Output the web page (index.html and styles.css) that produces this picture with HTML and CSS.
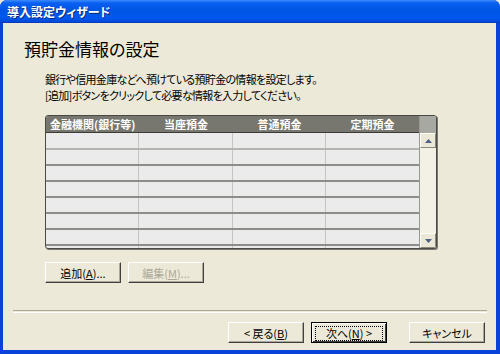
FILE: index.html
```html
<!DOCTYPE html>
<html lang="ja">
<head>
  <meta charset="UTF-8">
  <title>導入設定ウィザード</title>
  <link rel="stylesheet" href="styles.css">
</head>
<body>

  <div class="window">
    <div class="titlebar">導入設定ウィザード</div>

    <div class="content">
      <h1>預貯金情報の設定</h1>
      <div class="desc">
        <div>銀行や信用金庫などへ預けている預貯金の情報を設定します。</div>
        <div>[追加]ボタンをクリックして必要な情報を入力してください。</div>
      </div>

      <div class="list">
        <div class="grid">
          <div class="head">
            <div>金融機関(銀行等)</div>
            <div>当座預金</div>
            <div>普通預金</div>
            <div>定期預金</div>
          </div>
          <div class="row first"><div></div><div></div><div></div><div></div></div>
          <div class="row"><div></div><div></div><div></div><div></div></div>
          <div class="row"><div></div><div></div><div></div><div></div></div>
          <div class="row"><div></div><div></div><div></div><div></div></div>
          <div class="row"><div></div><div></div><div></div><div></div></div>
          <div class="row"><div></div><div></div><div></div><div></div></div>
          <div class="row"><div></div><div></div><div></div><div></div></div>
          <div class="row"><div></div><div></div><div></div><div></div></div>
        </div>
        <div class="scroll">
          <div class="scroll-head"></div>
          <div class="arrow up">
            <svg width="7" height="4" viewBox="0 0 7 4"><path d="M0 4 L3.5 0 L7 4 Z" fill="#4d6185"/></svg>
          </div>
          <div class="track"></div>
          <div class="arrow down">
            <svg width="7" height="4" viewBox="0 0 7 4"><path d="M0 0 L3.5 4 L7 0 Z" fill="#4d6185"/></svg>
          </div>
        </div>
      </div>

      <div class="actions">
        <button class="btn">追加(<u>A</u>)...</button>
        <button class="btn" disabled>編集(<u>M</u>)...</button>
      </div>

      <div class="sep"></div>

      <div class="nav">
        <button class="btn">&lt; 戻る(<u>B</u>)</button>
        <button class="btn default"><span>次へ(<u>N</u>) &gt;</span></button>
        <button class="btn cancel">キャンセル</button>
      </div>
    </div>
  </div>

</body>
</html>
```

FILE: styles.css
```css
body {
  margin: 0;
  font-family: "Noto Sans CJK JP", "Noto Sans", sans-serif;
  font-feature-settings: "palt";
  background: #ece9d8;
}

.window {
  width: 500px;
  height: 354px;
  box-sizing: border-box;
  display: flex;
  flex-direction: column;
  background: #0842d8;
  border-radius: 7px 7px 0 0;
  overflow: hidden;
}

.titlebar {
  height: 23px;
  line-height: 23px;
  padding-left: 7px;
  color: #fff;
  font-size: 12px;
  font-weight: bold;
  text-shadow: 1px 1px 0 #0a2a80;
  background: linear-gradient(#3c8cff 0, #0a60f0 3px, #0055e5 10px, #0058ee 18px, #0048d8 22px, #0a2fa0 23px);
}

.content {
  flex: 1;
  margin: 0 4px 4px 3px;
  background: #ece9d8;
  padding-left: 10px;
  padding-right: 9px;
}

h1 {
  margin: 15px 0 0 11px;
  font-size: 17px;
  font-weight: normal;
  line-height: 22px;
  color: #000;
}

.desc {
  margin: 11px 0 0 32px;
  font-size: 11px;
  line-height: 16px;
  letter-spacing: -0.7px;
  color: #000;
}

.list {
  margin: 12px 0 0 32px;
  width: 392px;
  height: 134px;
  box-sizing: border-box;
  display: flex;
  border: 1px solid #4a4a44;
  border-radius: 3px;
  box-shadow: 1px 1px 0 #7a7870;
  overflow: hidden;
  background: #ebebeb;
}

.grid {
  flex: 1;
}

.head,
.row {
  display: grid;
  grid-template-columns: 93px 94px 93px 1fr;
}

.head {
  height: 16px;
  background: #77776f;
  border-bottom: 1px solid #3a3a36;
}

.head div {
  color: #fff;
  font-size: 11px;
  font-weight: bold;
  line-height: 16px;
  text-align: center;
}

.head div:first-child {
  text-align: left;
  padding-left: 4px;
}

.row {
  height: 14px;
  border-bottom: 2px solid #8c8c88;
}

.row.first {
  height: 15px;
  border-bottom-color: #b4b4b0;
}

.row div {
  border-right: 1px solid #c4c4c0;
}

.row div:last-child {
  border-right: none;
}

.scroll {
  width: 16px;
  display: flex;
  flex-direction: column;
  border-left: 1px solid #9a9890;
}

.scroll-head {
  height: 17px;
  background: #a8a8a2;
}

.arrow {
  height: 13px;
  display: flex;
  align-items: center;
  justify-content: center;
  background: #ebe8d8;
  border: 1px solid;
  border-color: #fdfcf6 #8a887c #8a887c #fdfcf6;
}

.track {
  flex: 1;
  background: #f3f1e6;
}

.actions {
  display: flex;
  gap: 7px;
  margin: 13px 0 0 32px;
}

.btn {
  width: 76px;
  height: 21px;
  padding: 0;
  font-family: inherit;
  font-feature-settings: "palt";
  font-size: 11px;
  color: #000;
  background: #ece9d8;
  border: 1px solid;
  border-color: #fff #404040 #404040 #fff;
  box-shadow: inset -1px -1px 0 #aca899;
}

.btn:disabled {
  color: #aca899;
}

.sep {
  margin: 27px 0 0 0;
  height: 1px;
  border-top: 1px solid #aca899;
  border-bottom: 1px solid #fff;
}

.nav {
  display: flex;
  justify-content: flex-end;
  gap: 7px;
  margin-top: 9px;
  padding-right: 2px;
}

.btn.default {
  border: 1px solid #000;
  box-shadow: inset 1px 1px 0 #fff, inset -1px -1px 0 #404040;
  padding: 3px;
}

.btn.default span {
  display: block;
  height: 13px;
  line-height: 13px;
  border: 1px dotted #000;
}

.btn.cancel {
  margin-left: 15px;
}
```
